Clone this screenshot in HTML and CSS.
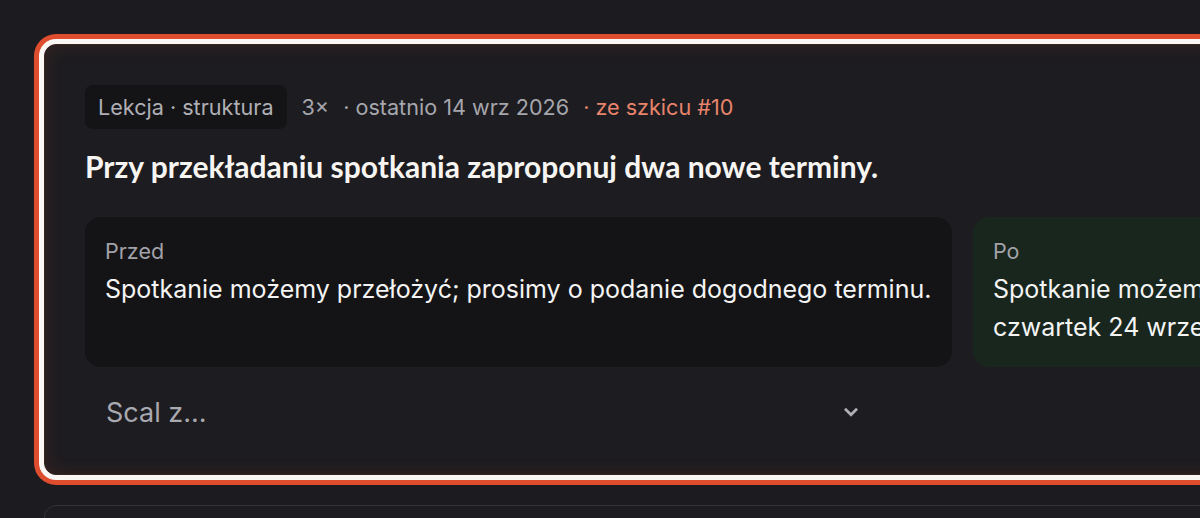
FILE: index.html
```html
<!DOCTYPE html>
<html lang="pl">
<head>
<meta charset="utf-8">
<title>Lekcja</title>
<link rel="stylesheet" href="styles.css">
</head>
<body>
<main class="list">
  <article class="card is-focused">
    <div class="meta">
      <span class="chip">Lekcja · struktura</span>
      <span class="count">3×</span>
      <span class="date">· ostatnio 14 wrz 2026</span>
      <span class="source">· ze szkicu #10</span>
    </div>
    <h2 class="title">Przy przekładaniu spotkania zaproponuj dwa nowe terminy.</h2>
    <div class="compare">
      <div class="pane pane-before">
        <div class="pane-label">Przed</div>
        <div class="pane-text">Spotkanie możemy przełożyć; prosimy o podanie dogodnego terminu.</div>
      </div>
      <div class="pane pane-after">
        <div class="pane-label">Po</div>
        <div class="pane-text">Spotkanie możemy przełożyć na wtorek 22 września o 10:00 lub czwartek 24 września o 14:00.</div>
      </div>
    </div>
    <div class="merge">
      <span class="merge-text">Scal z...</span>
      <svg class="chev" width="18" height="18" viewBox="0 0 16 16" aria-hidden="true"><path d="M3.5 6l4.5 4.5L12.5 6" fill="none" stroke="currentColor" stroke-width="2.4" stroke-linecap="square"/></svg>
    </div>
  </article>
  <article class="card"></article>
</main>
</body>
</html>
```

FILE: styles.css
```css
html, body {
  margin: 0;
  padding: 0;
  background: #1c1b1f;
  overflow: hidden;
  height: 518px;
}
body {
  font-family: Inter, "Noto Sans", sans-serif;
  color: #f2f2f2;
}
.list {
  padding: 44px 0 0 44px;
  display: flex;
  flex-direction: column;
  gap: 30px;
}
.card {
  width: 1835px;
  box-sizing: border-box;
  padding: 40px 40px 37px 40px;
  background: #1d1c20;
  border-radius: 12px;
  border: 1px solid #333238;
  min-height: 120px;
}
.card.is-focused {
  border-color: #3a2420;
  box-shadow: 0 0 0 5px #fbf7f5, 0 0 0 10px #de4d2e, inset 0 0 18px rgba(222, 77, 46, 0.14);
}
.meta {
  display: flex;
  align-items: center;
  font-size: 21.6px;
  color: #a6a6ad;
  height: 44px;
}
.chip {
  background: #141316;
  border-radius: 8px;
  padding: 0 13px;
  height: 44px;
  display: flex;
  align-items: center;
  margin-right: 15px;
  color: #afafb5;
}
.count { margin-right: 14px; }
.date { margin-right: 14px; }
.source { color: #e8846b; }
.title {
  font-family: Lato, "Noto Sans", sans-serif;
  font-weight: 700;
  font-size: 30px;
  line-height: 36px;
  margin: 19px 0 33px;
  color: #f7f5f2;
}
.compare {
  display: grid;
  grid-template-columns: 867px 867px;
  gap: 21px;
}
.pane {
  border-radius: 16px;
  padding: 15px 20px 19px;
  min-height: 150px;
  box-sizing: border-box;
}
.pane-before { background: #141416; }
.pane-after { background: #18261e; }
.pane-label {
  font-size: 21.5px;
  line-height: 38px;
  color: #a2a2a8;
}
.pane-text {
  font-size: 25px;
  line-height: 38px;
  color: #f4f4f4;
}
.merge {
  margin-top: 20px;
  width: 800px;
  height: 50px;
  box-sizing: border-box;
  padding: 0 25px 0 21px;
  display: flex;
  align-items: center;
  justify-content: space-between;
  color: #a9a9b0;
}
.merge-text { font-size: 27px; }
.chev { color: #b0b0b6; }
```
